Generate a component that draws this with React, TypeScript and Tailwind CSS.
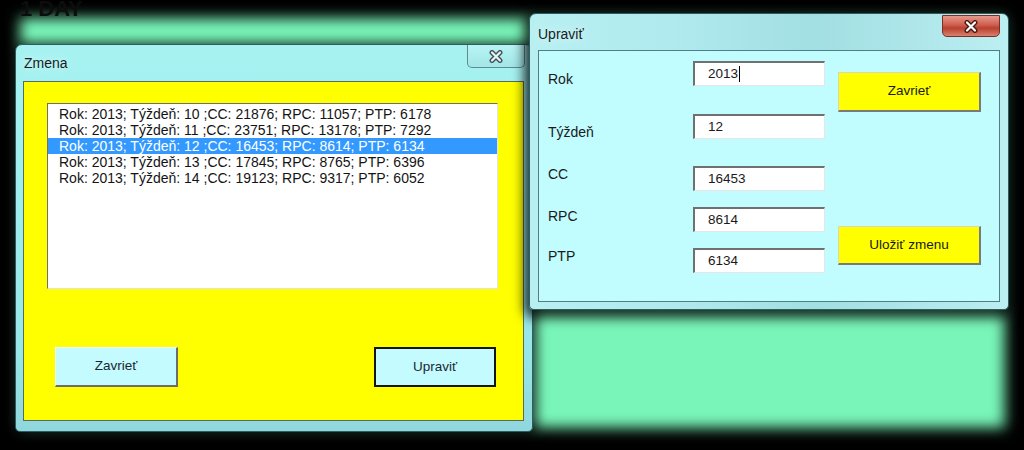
import React from "react";

const font = { fontFamily: '"Liberation Sans", Arial, sans-serif' };

function CloseGlyph({ outer, inner }: { outer: string; inner: string }) {
  return (
    <svg width="16" height="13" viewBox="0 0 16 13">
      <path d="M4 2.5 L12 10.5 M12 2.5 L4 10.5" stroke={outer} strokeWidth="5" strokeLinecap="round" fill="none" />
      <path d="M4 2.5 L12 10.5 M12 2.5 L4 10.5" stroke={inner} strokeWidth="2.2" strokeLinecap="round" fill="none" />
    </svg>
  );
}

const rows = [
  "Rok: 2013; Týždeň: 10 ;CC: 21876; RPC: 11057; PTP: 6178",
  "Rok: 2013; Týždeň: 11 ;CC: 23751; RPC: 13178; PTP: 7292",
  "Rok: 2013; Týždeň: 12 ;CC: 16453; RPC: 8614; PTP: 6134",
  "Rok: 2013; Týždeň: 13 ;CC: 17845; RPC: 8765; PTP: 6396",
  "Rok: 2013; Týždeň: 14 ;CC: 19123; RPC: 9317; PTP: 6052",
];

const fields = [
  { label: "Rok", value: "2013", mt: "mt-[10px]", pt: "pt-[10px]", caret: true },
  { label: "Týždeň", value: "12", mt: "mt-[27px]", pt: "pt-[10px]", caret: false },
  { label: "CC", value: "16453", mt: "mt-[26px]", pt: "pt-0", caret: false },
  { label: "RPC", value: "8614", mt: "mt-[16px]", pt: "pt-[1px]", caret: false },
  { label: "PTP", value: "6134", mt: "mt-[16px]", pt: "pt-0", caret: false },
];

export default function App() {
  return (
    <div className="relative h-[450px] w-[1024px] overflow-hidden bg-black" style={font}>
      {/* desktop background */}
      <div className="h-full w-full pl-[20px] pr-[19px] pt-[18px] pb-[22px]">
        <div className="h-full w-full bg-[#79f5b9] blur-[7px]" />
      </div>
      <div className="absolute left-[20px] top-[-8px] text-[22px] font-bold text-[#0d0d0d]">1 DAY</div>

      {/* Zmena window */}
      <div className="absolute left-[15px] top-[44px] flex h-[388px] w-[518px] flex-col rounded-t-[7px] rounded-b-[5px] border border-[#2f5c62] bg-[linear-gradient(180deg,#a6f2f1_0%,#a2f0f0_20%,#98e6e8_80%,#8fd7dc_100%)] pl-[7px] pr-[8px] pb-[10px] shadow-[0_2px_12px_4px_rgba(0,0,0,0.75)]">
        <div className="flex h-[36px] items-start justify-between">
          <span className="mt-[8px] ml-[1px] text-[14px] text-[#1b1b1b] [text-shadow:0_0_8px_#e8ffff]">Zmena</span>
          <div className="mr-[-1px] flex h-[23px] w-[58px] items-center justify-center rounded-b-[5px] border border-t-0 border-[#5f8a90] bg-[linear-gradient(180deg,#b8f4f4,#a2e6e8)]">
            <CloseGlyph outer="#445258" inner="#e4f6f6" />
          </div>
        </div>
        <div className="flex flex-1 flex-col border border-[#586a5a] bg-[#ffff00] pl-[23px] pt-[21px]">
          <div className="h-[186px] w-[451px] border-t border-l border-[#6f6f6f] border-r border-b border-r-[#e2e2e2] border-b-[#e2e2e2] bg-white pt-[2px] text-[14px] leading-[16px] text-[#141414]">
            {rows.map((r, i) => (
              <div key={i} className={`h-[16px] pl-[11px] whitespace-nowrap ${i === 2 ? "bg-[#3399ff] text-white" : ""}`}>
                {r}
              </div>
            ))}
          </div>
          <div className="mt-[58px] flex w-[449px] justify-between pl-[8px]">
            <div className="flex h-[40px] w-[123px] items-center justify-center border-t border-l border-[#eaffff] border-r-2 border-b-2 border-r-[#6d6d6d] border-b-[#6d6d6d] bg-[#c4fbff] text-[13.5px] text-[#1a2830]">
              Zavrieť
            </div>
            <div className="flex h-[40px] w-[122px] items-center justify-center border-2 border-[#151515] bg-[#c4fbff] text-[13.5px] text-[#1a2830]">
              Upraviť
            </div>
          </div>
        </div>
      </div>

      {/* Upraviť window */}
      <div className="absolute left-[529px] top-[13px] flex h-[297px] w-[480px] flex-col rounded-t-[7px] rounded-b-[5px] border border-[#2f5c62] bg-[linear-gradient(90deg,#b8f0f2_0%,#b0eaee_30%,#a2dfe2_60%,#aee6ea_80%,#bcefF1_100%)] px-[8px] pb-[7px] shadow-[0_3px_12px_5px_rgba(0,0,0,0.8)]">
        <div className="flex h-[36px] items-start justify-between">
          <span className="mt-[10px] text-[14px] text-[#1b1b1b] [text-shadow:0_0_8px_#e8ffff]">Upraviť</span>
          <div className="mt-[1px] flex h-[22px] w-[58px] items-center justify-center rounded-b-[5px] border border-[#7a3028] bg-[linear-gradient(180deg,#e59a8c_0%,#cf5d4d_45%,#b8402f_60%,#d8806c_100%)]">
            <CloseGlyph outer="#4a1a14" inner="#ffffff" />
          </div>
        </div>
        <div className="flex flex-1 border border-[#4f7f86] bg-[#c1fcff] pl-[9px]">
          <div className="flex w-[277px] flex-col">
            {fields.map((f) => (
              <div key={f.label} className={`flex ${f.mt}`}>
                <div className={`w-[145px] ${f.pt} text-[14px] leading-[16px] text-[#1a1a1a]`}>{f.label}</div>
                <div className="flex h-[25px] w-[132px] items-center border-t-2 border-l-2 border-[#707070] border-r border-b border-r-[#e6e6e6] border-b-[#e6e6e6] bg-white pl-[13px] text-[13.5px] text-[#1a1a1a]">
                  {f.value}
                  {f.caret && <span className="ml-[1px] inline-block h-[16px] w-[1px] bg-black" />}
                </div>
              </div>
            ))}
          </div>
          <div className="ml-[13px] flex flex-col pt-[21px]">
            <div className="flex h-[40px] w-[143px] items-center justify-center border-t border-l border-[#d8d8c0] border-r-2 border-b-2 border-r-[#7a7a7a] border-b-[#7a7a7a] bg-[#ffff00] text-[13.5px] text-[#1a1a1a]">
              Zavrieť
            </div>
            <div className="mt-[114px] flex h-[39px] w-[143px] items-center justify-center border-t border-l border-[#d8d8c0] border-r-2 border-b-2 border-r-[#7a7a7a] border-b-[#7a7a7a] bg-[#ffff00] text-[13.5px] text-[#1a1a1a]">
              Uložiť zmenu
            </div>
          </div>
        </div>
      </div>
    </div>
  );
}
